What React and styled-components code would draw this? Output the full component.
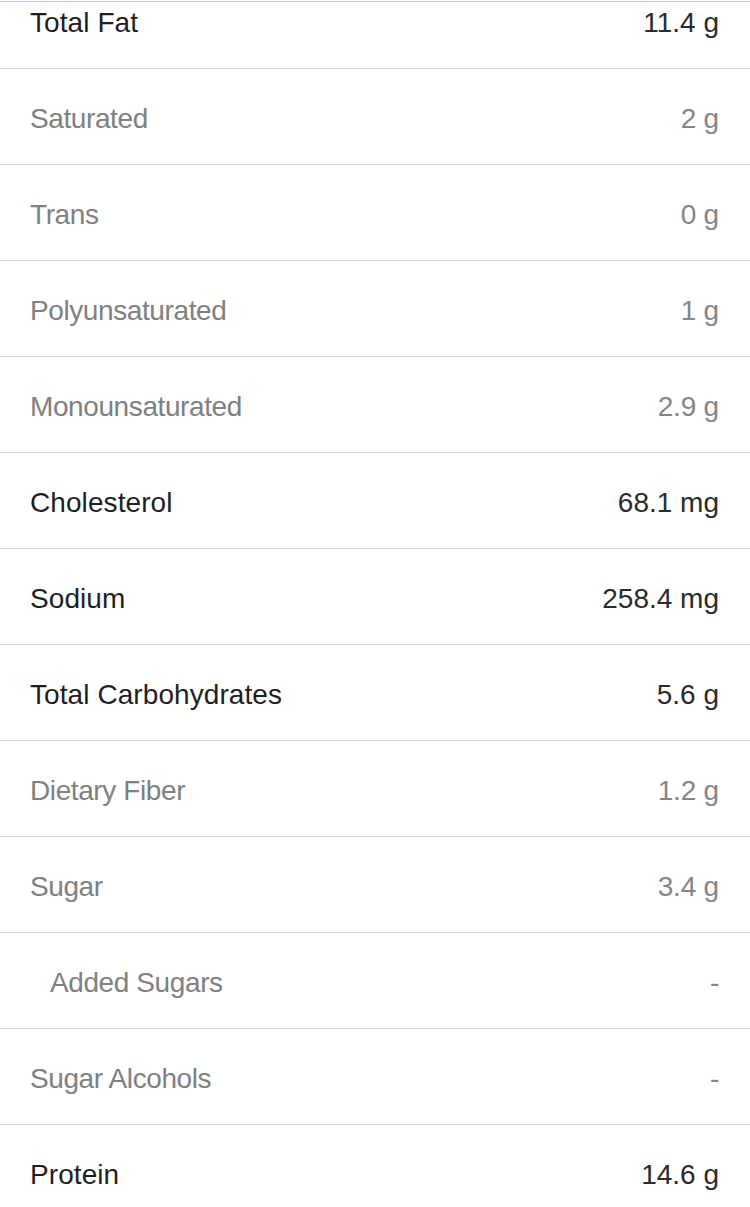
import React, { useLayoutEffect, useRef } from "react";
import styled, { createGlobalStyle } from "styled-components";

const Global = createGlobalStyle`
  html, body { margin: 0; padding: 0; background: #ffffff; height: 100%; }
  body { font-family: "Liberation Sans", Arial, Helvetica, sans-serif; -webkit-font-smoothing: antialiased; }
`;

const Screen = styled.div`
  padding-top: 1px;
  background: #fff;
`;

const Viewport = styled.div`
  height: calc(100vh - 2px);
  border-top: 1px solid #c4c4c4;
  overflow-y: auto;
  scrollbar-width: none;
  &::-webkit-scrollbar { display: none; }
`;

const List = styled.ul`
  list-style: none;
  margin: 0;
  padding: 0;
`;

const Row = styled.li`
  box-sizing: border-box;
  height: 96px;
  display: flex;
  align-items: center;
  justify-content: space-between;
  padding: 4px 31px 0 ${(p) => (p.$indent ? 50 : 30)}px;
  border-bottom: 1px solid #dcdcdc;
  font-size: 28px;
`;

const Label = styled.span`
  color: ${(p) => (p.$sub ? "#808080" : "#1f1f1f")};
  letter-spacing: ${(p) => (p.$sub ? "-0.4px" : "0.08px")};
`;

const Value = styled.span`
  color: ${(p) => (p.$sub ? "#858585" : "#2b2b2b")};
  letter-spacing: ${(p) => (p.$sub ? "-0.2px" : "0")};
`;

const rows = [
  { label: "Total Fat", value: "11.4 g" },
  { label: "Saturated", value: "2 g", sub: true },
  { label: "Trans", value: "0 g", sub: true },
  { label: "Polyunsaturated", value: "1 g", sub: true },
  { label: "Monounsaturated", value: "2.9 g", sub: true },
  { label: "Cholesterol", value: "68.1 mg" },
  { label: "Sodium", value: "258.4 mg" },
  { label: "Total Carbohydrates", value: "5.6 g" },
  { label: "Dietary Fiber", value: "1.2 g", sub: true },
  { label: "Sugar", value: "3.4 g", sub: true },
  { label: "Added Sugars", value: "-", sub: true, indent: true },
  { label: "Sugar Alcohols", value: "-", sub: true },
  { label: "Protein", value: "14.6 g" },
];

export default function App() {
  const ref = useRef(null);
  useLayoutEffect(() => {
    if (ref.current) ref.current.scrollTop = 29;
  }, []);
  return (
    <>
      <Global />
      <Screen>
        <Viewport ref={ref}>
          <List>
            {rows.map((r) => (
              <Row key={r.label} $indent={r.indent}>
                <Label $sub={r.sub}>{r.label}</Label>
                <Value $sub={r.sub}>{r.value}</Value>
              </Row>
            ))}
          </List>
        </Viewport>
      </Screen>
    </>
  );
}
